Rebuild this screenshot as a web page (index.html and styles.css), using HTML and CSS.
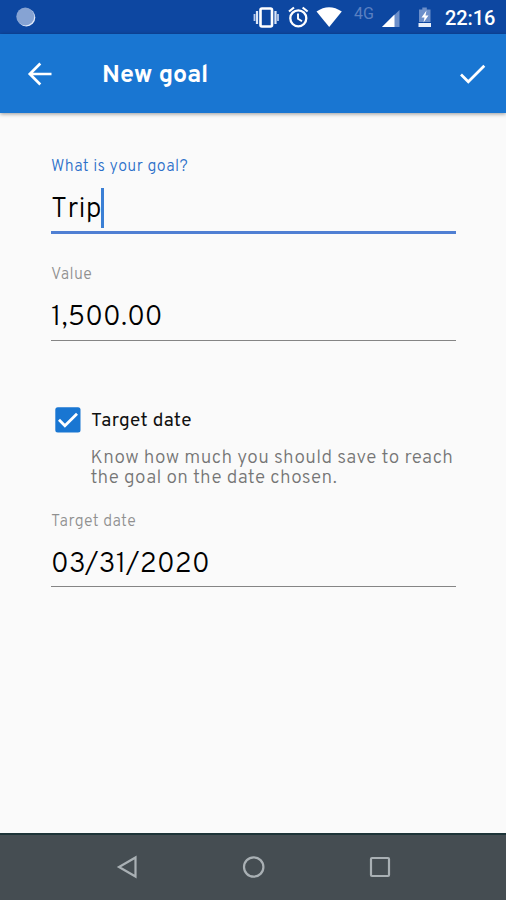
FILE: index.html
```html
<!DOCTYPE html>
<html lang="en">
<head>
<meta charset="utf-8">
<title>New goal</title>
<link rel="stylesheet" href="styles.css">
</head>
<body>
<div class="screen">
  <div class="status">
    <svg class="spinner" width="22" height="22" viewBox="0 0 22 22"><circle cx="11.300" cy="11.500" r="9" fill="#e1eafa"/><circle cx="10.300" cy="10.500" r="9" fill="#86a3d3"/></svg>
    <svg class="status-icons" width="190" height="34" viewBox="250 0 190 34">
      <g fill="none" stroke="#fff">
        <rect x="260.500" y="8.500" width="11.500" height="18" rx="1.500" stroke-width="2.600"/>
        <path d="M257 11v13M275.500 11v13" stroke-width="2.200" stroke="#dce6f7"/>
        <path d="M254.500 14v7M278 14v7" stroke-width="1.800" stroke="#b9cbeb"/>
        <circle cx="298.300" cy="18.300" r="8" stroke-width="2.300"/>
        <path d="M298 13.500v5.300l4 2.500" stroke-width="1.900"/>
        <path d="M289 11.500l5-4M307.600 11.500l-5-4" stroke-width="2.200"/>
      </g>
      <path d="M316.500 11.500Q329 3 341.800 11.500L329.200 27Z" fill="#fff"/>
      <path d="M399.500 10v17H382Z" fill="#6c8fca"/>
      <path d="M394.500 14.500V27H382Z" fill="#fff"/>
      <path d="M419 9.500h3.300V7.500h4.500v2h3.700V22H419Z" fill="#6c8fca"/>
      <path d="M426.500 10.500l-5 7h3l-1 5 5-7h-3Z" fill="#fff"/>
      <path d="M418.500 23h12.500v4h-12.500Z" fill="#e8effa"/>
    </svg>
    <span class="network">4G</span>
    <span class="clock">22:16</span>
  </div>
  <header class="appbar">
    <svg class="back" width="26" height="26" viewBox="0 0 26 26"><path d="M24.500 13H3M13.300 2.500L2.800 13l10.500 10.500" fill="none" stroke="#fff" stroke-width="2.700"/></svg>
    <h1 class="title">New goal</h1>
    <svg class="done" width="28" height="24" viewBox="0 0 28 24"><path d="M2 12.500l7.300 7.300L25.300 3.800" fill="none" stroke="#fff" stroke-width="2.700"/></svg>
  </header>
  <main class="form">
    <div class="field focused">
      <div class="label">What is your goal?</div>
      <div class="value"><span class="typed">Trip</span><span class="caret"></span></div>
    </div>
    <div class="field second">
      <div class="label">Value</div>
      <div class="value">1,500.00</div>
    </div>
    <div class="option">
      <svg class="checkbox" width="26" height="26" viewBox="0 0 26 26"><rect x=".3" y=".3" width="25.200" height="25.200" rx="2.500" fill="#1976d2"/><path d="M4 12.800l5.900 6L22 6.700" fill="none" stroke="#fff" stroke-width="2.800"/></svg>
      <div class="option-title">Target date</div>
    </div>
    <p class="hint">Know how much you should save to reach<br>the goal on the date chosen.</p>
    <div class="field third">
      <div class="label">Target date</div>
      <div class="value">03/31/2020</div>
    </div>
  </main>
  <nav class="navbar">
    <svg width="24" height="24" viewBox="0 0 24 24"><path d="M20.500 2.500v19L4 12Z"/></svg>
    <svg width="24" height="24" viewBox="0 0 24 24"><circle cx="11.700" cy="12" r="9.700"/></svg>
    <svg width="24" height="24" viewBox="0 0 24 24"><rect x="3" y="3" width="18" height="18" rx="1"/></svg>
  </nav>
</div>
</body>
</html>
```
FILE: styles.css
```css
* { box-sizing: border-box; }
body { margin: 0; font-family: Overpass, Roboto, "Liberation Sans", sans-serif; background: #fafafa; }
svg { display: block; flex: none; }
.screen { width: 506px; height: 900px; display: flex; flex-direction: column; background: #fafafa; overflow: hidden; }
.status { height: 34px; background: #0d47a1; display: flex; align-items: center; padding-left: 15px; position: relative; font-family: Roboto, sans-serif; }
.status-icons { margin-left: 213px; }
.network { position: absolute; left: 354px; top: 5px; font-size: 16px; line-height: 18px; color: #5b80c1; }
.clock { margin-left: 5px; font-size: 20px; line-height: 24px; font-weight: 500; color: #fff; letter-spacing: -.1px; padding-top: 2px; }
.appbar { height: 79px; background: #1976d2; display: flex; align-items: center; padding: 0 19px 0 27px; box-shadow: 0 1px 4px rgba(0,0,0,.4); position: relative; }
.title { margin: 0 auto 0 49px; padding-top: 5px; font-size: 25px; line-height: 30px; font-weight: 700; color: #fff; }
.form { flex: 1; padding: 44px 50px 0 51px; }
.field { height: 77px; border-bottom: 1.500px solid #858585; }
.focused { border-bottom: 3px solid #4f7fd3; }
.second { margin-top: 31px; height: 76px; }
.label { font-size: 16px; line-height: 20px; color: #909090; font-weight: 300; letter-spacing: .4px; }
.focused .label { color: #2b6fc9; }
.value { display: flex; align-items: flex-start; height: 44px; margin-top: 3px; padding-top: 8px; font-size: 28px; line-height: 44px; color: #000; font-weight: 300; letter-spacing: .2px; }
.typed { font-kerning: none; letter-spacing: .3px; }
.caret { width: 3px; height: 40px; margin-left: -1px; background: #3a7fd5; }
.option { display: flex; align-items: center; height: 26px; margin-top: 66px; padding-left: 4px; }
.option-title { margin-left: 10px; padding-top: 2px; font-size: 19px; line-height: 26px; color: #111; letter-spacing: .35px; }
.hint { margin: 15px -20px 0 39.500px; font-size: 19px; line-height: 20px; color: #757575; font-weight: 300; letter-spacing: .38px; white-space: nowrap; }
.third { margin-top: 24px; height: 75px; }
.navbar { height: 67px; border-top: 2px solid #1d3438; background: #454d52; display: flex; justify-content: space-between; align-items: center; padding: 0 114px 2px 115px; }
.navbar svg { fill: none; stroke: #a9b0b4; stroke-width: 2.200; }
```
